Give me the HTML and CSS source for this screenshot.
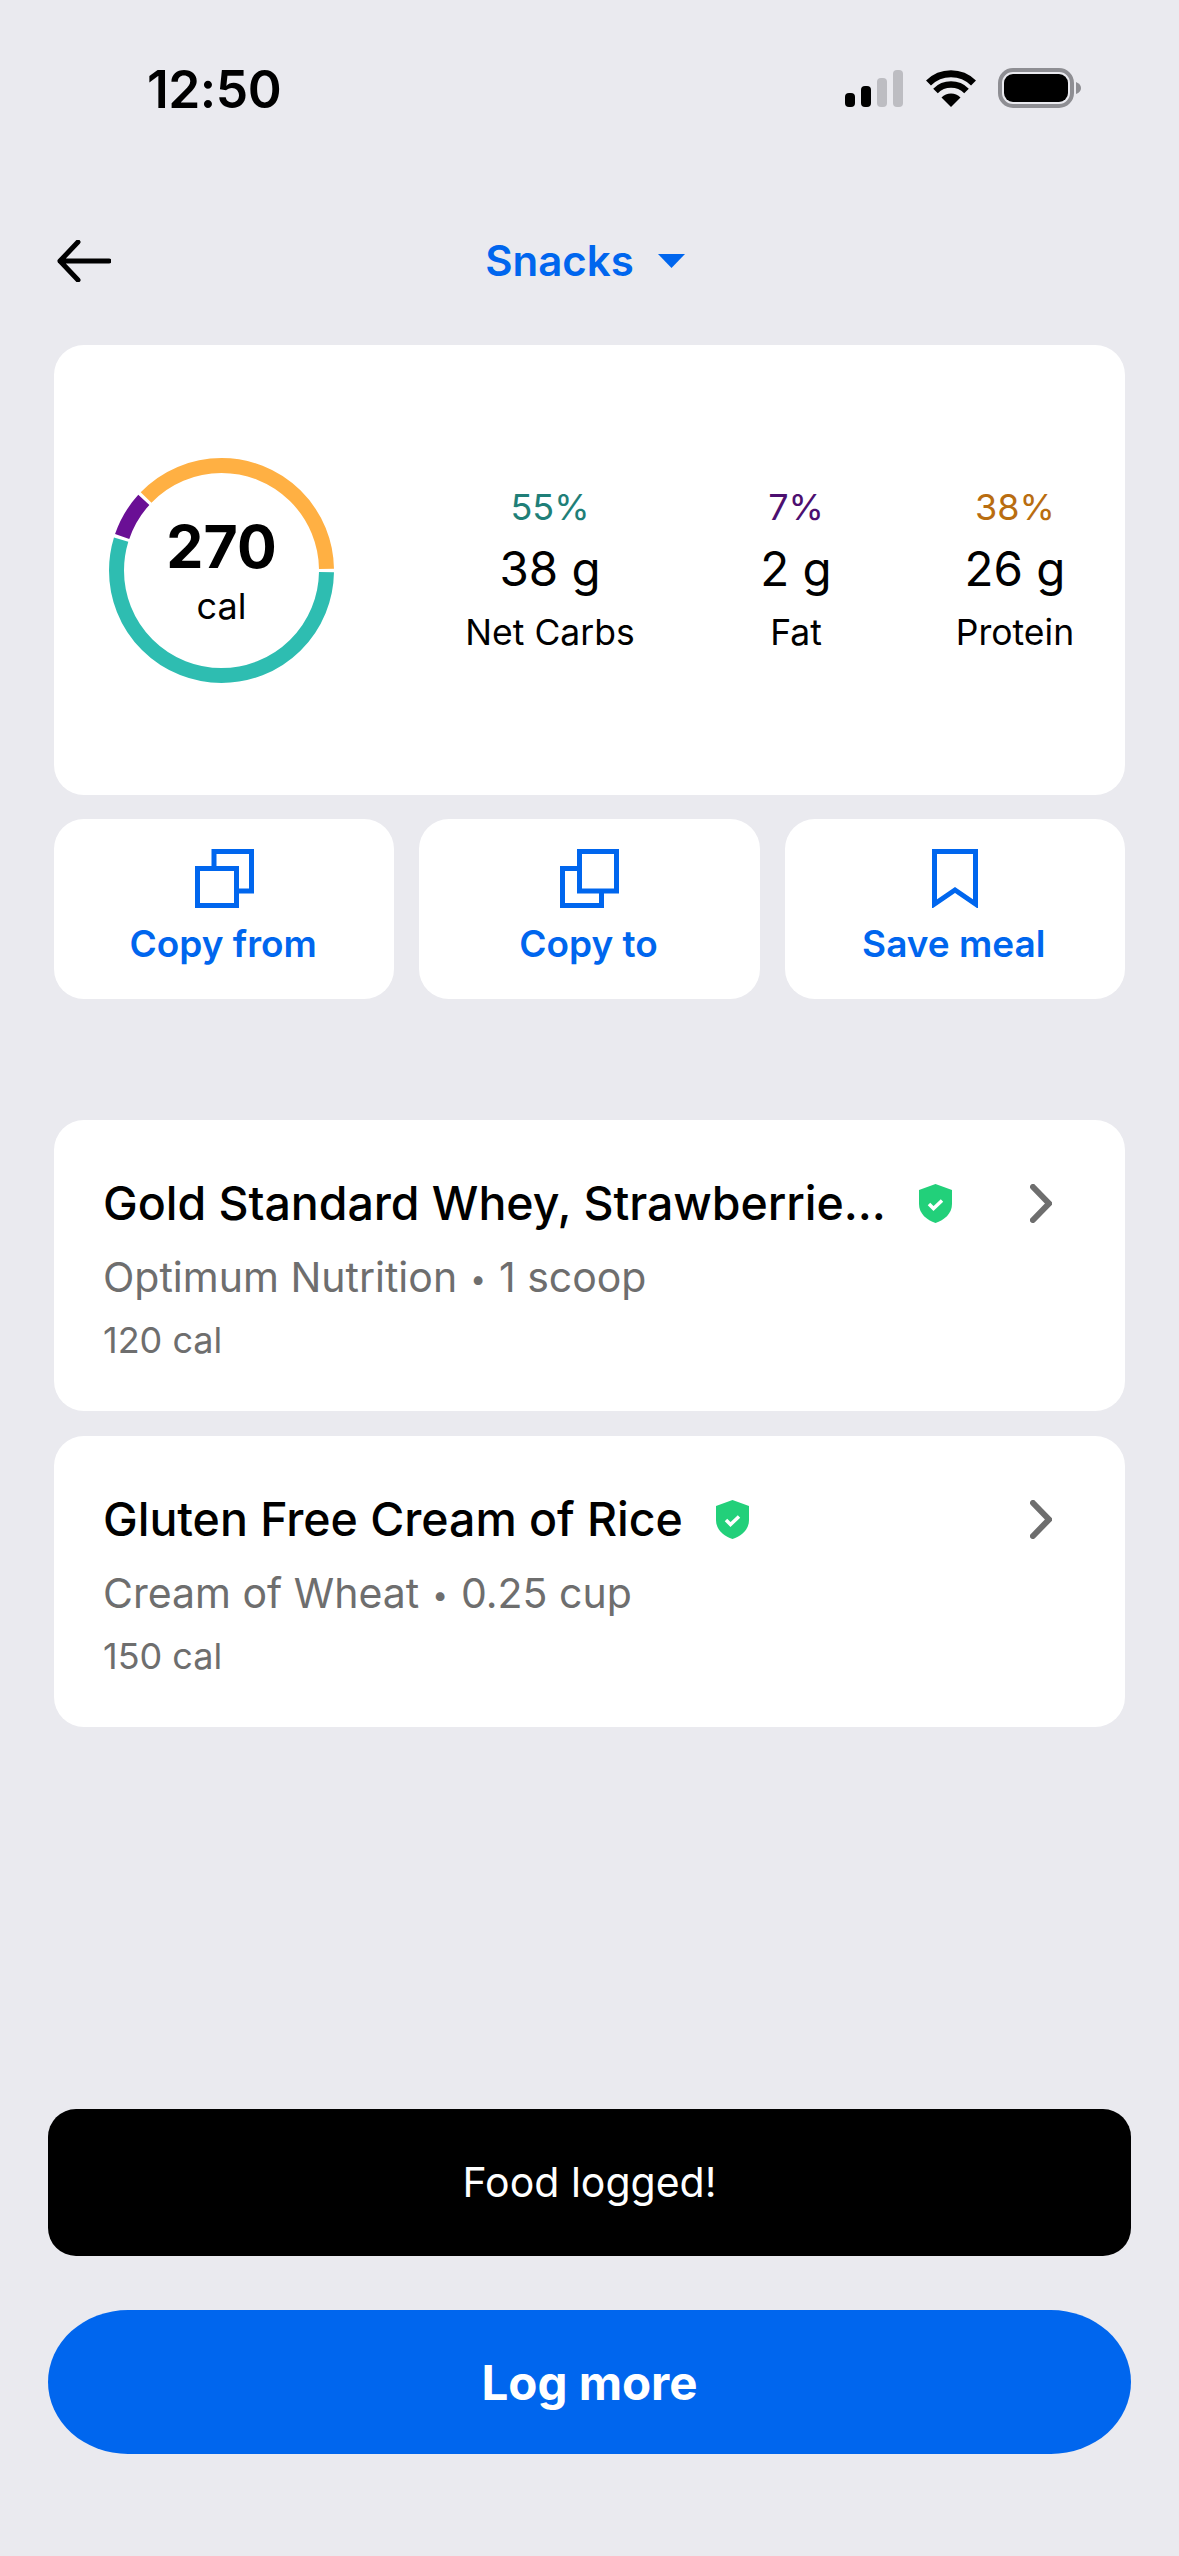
FILE: index.html
```html
<!DOCTYPE html>
<html lang="en">
<head>
<meta charset="utf-8">
<title>Snacks</title>
<link rel="stylesheet" href="styles.css">
</head>
<body>
<div class="page">
  <div class="status">
    <span class="time">12:50</span>
    <div class="status-icons">
      <svg class="signal" width="58" height="37" viewBox="0 0 58 37"><rect x="0" y="23" width="10" height="14" rx="4" fill="#000"/><rect x="16" y="16" width="10" height="21" rx="4" fill="#000"/><rect x="32" y="8" width="10" height="29" rx="4" fill="#bdbdc2"/><rect x="48" y="0" width="10" height="37" rx="4" fill="#bdbdc2"/></svg>
      <svg class="wifi" width="50" height="37" viewBox="0 0 50 37"><path d="M25 37 L15.5 27.5 A13.5 13.5 0 0 1 34.500 27.5 Z" fill="#000"/><path d="M9.500 21 A22 22 0 0 1 40.500 21" fill="none" stroke="#000" stroke-width="6.500"/><path d="M2.500 13 A32 32 0 0 1 47.500 13" fill="none" stroke="#000" stroke-width="7"/></svg>
      <svg class="battery" width="84" height="40" viewBox="0 0 84 40"><rect x="2" y="2" width="72" height="36" rx="13" fill="none" stroke="#8e8e93" stroke-width="4"/><rect x="6" y="6" width="64" height="28" rx="9" fill="#000"/><path d="M78 14 Q83 16 83 20 Q83 24 78 26 Z" fill="#8e8e93"/></svg>
    </div>
  </div>

  <header class="nav">
    <svg class="back" width="54" height="42" viewBox="0 0 54 42"><path d="M52 21 H3 M21 2 L3 21 L21 40" fill="none" stroke="#000" stroke-width="5" stroke-linecap="round" stroke-linejoin="round"/></svg>
    <div class="nav-title">
      <span>Snacks</span>
      <svg width="27" height="14" viewBox="0 0 27 14"><path d="M0 0 H27 L13.500 14 Z" fill="#0066ee"/></svg>
    </div>
  </header>

  <section class="card summary">
    <div class="ring">
      <svg width="225" height="225" viewBox="0 0 225 225">
        <circle class="seg seg-carb" cx="112.500" cy="112.500" r="105" pathLength="100" stroke-dasharray="54.5 45.5" stroke-dashoffset="-0.25"/>
        <circle class="seg seg-fat" cx="112.500" cy="112.500" r="105" pathLength="100" stroke-dasharray="6.500 93.500" stroke-dashoffset="-55.250"/>
        <circle class="seg seg-pro" cx="112.500" cy="112.500" r="105" pathLength="100" stroke-dasharray="37.500 62.500" stroke-dashoffset="-62.250"/>
      </svg>
      <div class="ring-text">
        <span class="ring-num">270</span>
        <span class="ring-unit">cal</span>
      </div>
    </div>
    <div class="macros">
      <div class="macro"><span class="pct pct-carb">55%</span><span class="val">38 g</span><span class="lbl">Net Carbs</span></div>
      <div class="macro"><span class="pct pct-fat">7%</span><span class="val">2 g</span><span class="lbl">Fat</span></div>
      <div class="macro"><span class="pct pct-pro">38%</span><span class="val">26 g</span><span class="lbl">Protein</span></div>
    </div>
  </section>

  <div class="actions">
    <div class="card action">
      <svg width="59" height="59" viewBox="0 0 59 59" fill="none" stroke="#0066ee" stroke-width="5"><path d="M19 17 V2.500 H56.500 V42 H42"/><rect x="2.500" y="19.500" width="39" height="37"/></svg>
      <span>Copy from</span>
    </div>
    <div class="card action">
      <svg width="59" height="59" viewBox="0 0 59 59" fill="none" stroke="#0066ee" stroke-width="5"><path d="M17 19.500 H2.500 V56.500 H41.500 V42"/><rect x="19.500" y="2.500" width="37" height="39.500"/></svg>
      <span>Copy to</span>
    </div>
    <div class="card action">
      <svg width="46" height="59" viewBox="0 0 46 59" fill="none" stroke="#0066ee" stroke-width="5"><path d="M2.500 2.500 H43.500 V55 L23 41 L2.500 55 Z" stroke-linejoin="miter"/></svg>
      <span>Save meal</span>
    </div>
  </div>

  <div class="foods">
    <article class="card food">
      <div class="food-top">
        <span class="food-name">Gold Standard Whey, Strawberrie...</span>
        <svg class="shield" width="33" height="39" viewBox="0 0 33 39"><path d="M16.500 0 L33 6 V20 C33 30 25 36 16.500 39 C8 36 0 30 0 20 V6 Z" fill="#22d07a"/><path d="M10 20 L14.500 24.500 L23 16.500" fill="none" stroke="#fff" stroke-width="3.500"/></svg>
        <svg class="chevron" width="22" height="39" viewBox="0 0 22 39"><path d="M3 3 L19 19.500 L3 36" fill="none" stroke="#6e6e6e" stroke-width="6" stroke-linecap="round"/></svg>
      </div>
      <div class="food-sub">Optimum Nutrition <span class="dot">•</span> 1 scoop</div>
      <div class="food-cal">120 cal</div>
    </article>
    <article class="card food">
      <div class="food-top">
        <span class="food-name">Gluten Free Cream of Rice</span>
        <svg class="shield" width="33" height="39" viewBox="0 0 33 39"><path d="M16.500 0 L33 6 V20 C33 30 25 36 16.500 39 C8 36 0 30 0 20 V6 Z" fill="#22d07a"/><path d="M10 20 L14.500 24.500 L23 16.500" fill="none" stroke="#fff" stroke-width="3.500"/></svg>
        <svg class="chevron" width="22" height="39" viewBox="0 0 22 39"><path d="M3 3 L19 19.500 L3 36" fill="none" stroke="#6e6e6e" stroke-width="6" stroke-linecap="round"/></svg>
      </div>
      <div class="food-sub">Cream of Wheat <span class="dot">•</span> 0.25 cup</div>
      <div class="food-cal">150 cal</div>
    </article>
  </div>

  <div class="toast">Food logged!</div>
  <div class="cta">Log more</div>
</div>
</body>
</html>
```
FILE: styles.css
```css
* { box-sizing: border-box; }
html, body { margin: 0; padding: 0; }
body { background: #eaeaef; font-family: Inter, "Noto Sans", sans-serif; color: #000; }
.page { height: 2556px; display: flex; flex-direction: column; overflow: hidden; }

.status { height: 176px; display: flex; align-items: center; justify-content: space-between; padding: 0 97px 0 147px; }
.time { font-size: 51.500px; font-weight: 600; line-height: 60px; letter-spacing: -0.5px; padding-top: 2px; }
.status-icons { display: flex; align-items: center; gap: 23px; }
.status-icons svg { display: block; }
.wifi { margin-right: -1px; }

.nav { height: 169px; display: flex; align-items: center; padding: 0 120px 0 57px; }
.back { display: block; flex: none; }
.nav-title { flex: 1; display: flex; justify-content: center; align-items: center; gap: 24px; color: #0066ee; font-size: 42px; font-weight: 600; line-height: 50px; }

.card { background: #fff; border-radius: 30px; }

.summary { margin: 0 54px; height: 450px; flex: none; display: flex; align-items: center; padding-left: 55px; }
.ring { position: relative; width: 225px; height: 225px; flex: none; }
.ring svg { display: block; }
.seg { fill: none; stroke-width: 15; }
.seg-carb { stroke: #2ebdb1; }
.seg-fat { stroke: #6a0f95; }
.seg-pro { stroke: #ffb043; }
.ring-text { position: absolute; left: 0; right: 0; top: 0; bottom: 0; display: flex; flex-direction: column; align-items: center; justify-content: center; }
.ring-num { font-size: 59px; font-weight: 700; line-height: 70px; }
.ring-unit { font-size: 36px; line-height: 44px; padding-top: 2px; }

.macros { margin-left: 116px; display: grid; grid-template-columns: 200px 292px 146px; }
.macro { display: flex; flex-direction: column; align-items: center; }
.pct { font-size: 36px; line-height: 62px; }
.pct-carb { color: #1f7f78; }
.pct-fat { color: #4c0f70; }
.pct-pro { color: #b96d10; }
.val { font-size: 47.500px; font-weight: 400; line-height: 62px; }
.lbl { font-size: 35.500px; line-height: 62px; padding-top: 2px; }

.actions { margin: 24px 54px 0; display: grid; grid-template-columns: repeat(3, 1fr); gap: 25px; }
.action { height: 180px; display: flex; flex-direction: column; align-items: center; padding-top: 30px; color: #0066ee; font-size: 37px; font-weight: 600; }
.action svg { display: block; flex: none; }
.action span { line-height: 44px; margin-top: 14px; padding-right: 2px; }

.foods { margin: 121px 54px 0; display: flex; flex-direction: column; gap: 25px; }
.food { height: 291px; padding: 63px 73px 0 49px; }
.food-top { height: 40px; display: flex; align-items: center; }
.food-name { font-size: 46.500px; font-weight: 500; line-height: 40px; white-space: nowrap; letter-spacing: -0.05px; }
.shield { margin-left: 33px; flex: none; display: block; }
.chevron { margin-left: auto; flex: none; display: block; }
.food-sub { margin-top: 30px; font-size: 41px; line-height: 48px; color: #6e6e6e; }
.dot { font-size: 28px; vertical-align: 3px; margin: 0 1.500px; }
.food-cal { margin-top: 17px; font-size: 36px; line-height: 40px; color: #6e6e6e; }

.toast { margin: auto 48px 0; height: 147px; flex: none; background: #000; color: #fff; border-radius: 28px; display: flex; align-items: center; justify-content: center; font-size: 41px; padding-bottom: 2px; }
.cta { margin: 54px 48px 102px; height: 144px; flex: none; background: #0066ee; color: #fff; border-radius: 80px / 72px; display: flex; align-items: center; justify-content: center; font-size: 47.500px; font-weight: 700; }
```
